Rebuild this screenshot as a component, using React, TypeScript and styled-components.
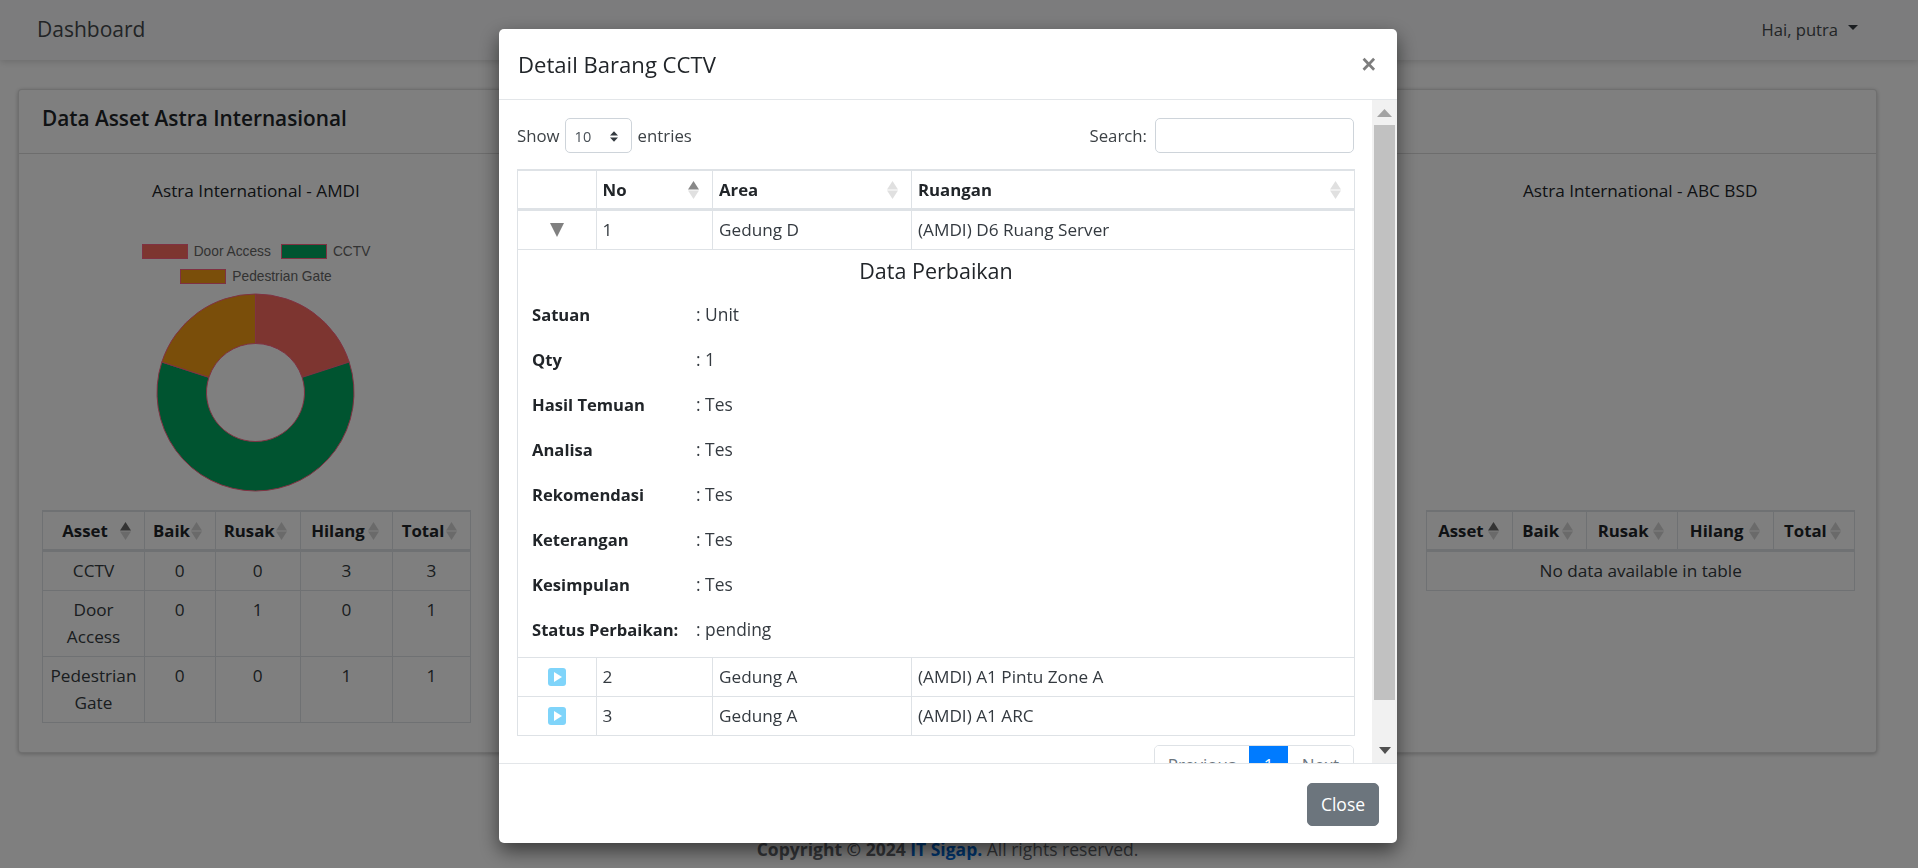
import React from 'react';
import styled, { createGlobalStyle } from 'styled-components';

const Global = createGlobalStyle`
  html, body { margin: 0; padding: 0; height: 868px; overflow: hidden; background: #fff; }
  body { font-family: "Open Sans", "Noto Sans", sans-serif; font-size: 17.2px; line-height: 27px; color: #212529; }
  * { box-sizing: border-box; }
`;

const Navbar = styled.header`
  height: 60px; background: #f8f9fa; display: flex; align-items: center; justify-content: space-between;
  padding: 0 60px 2px 37px; box-shadow: 0 2px 7px rgba(0,0,0,.15);
`;
const Brand = styled.div`font-size: 21px; color: #45494d;`;
const UserMenu = styled.div`display: flex; align-items: center; gap: 10px; font-size: 16.6px; color: #45494d;`;
const Caret = styled.span`width: 0; height: 0; border-left: 5px solid transparent; border-right: 5px solid transparent; border-top: 5px solid #343a40; margin-top: -3px;`;

const Page = styled.main`width: 1895px; padding: 29px 18px 0;`;
const Card = styled.section`
  height: 664px; border: 1px solid rgba(0,0,0,.125); border-radius: 4px; box-shadow: 0 1px 4px rgba(0,0,0,.25); background: #fff;
`;
const CardHeader = styled.div`
  height: 64px; padding: 0 23px 6px; display: flex; align-items: center; border-bottom: 1px solid rgba(0,0,0,.14);
  font-size: 20.8px; font-weight: 600; color: #212529;
`;
const CardBody = styled.div`
  display: grid; grid-template-columns: repeat(4, 428px); column-gap: 33.4px; padding: 23px 23px 0;
`;
const Column = styled.div`display: flex; flex-direction: column;`;
const ColumnTitle = styled.div`text-align: center; height: 27px; font-size: 17.2px; margin-bottom: 1px; color: #212529;`;
const ChartArea = styled.div`height: 305px; display: flex; flex-direction: column; align-items: center; padding-top: 34px;`;
const Legend = styled.div`display: flex; flex-wrap: wrap; justify-content: center; align-content: flex-start; column-gap: 10px; width: 300px; height: 54px;`;
const LegendItem = styled.div`display: flex; align-items: center; gap: 6px; height: 25px; font-family: "Liberation Sans", Arial, sans-serif; font-size: 13.75px; color: #666;`;
const Swatch = styled.span<{ $c: string }>`width: 46px; height: 15px; background: ${p => p.$c}; border: 1px solid rgb(255, 99, 132);`;
const DonutSvg = styled.svg`width: 200px; height: 200px; display: block; flex: none;`;

const DataTable = styled.table`
  table-layout: fixed; border-collapse: collapse; width: 100%; color: #212529;
`;
const Col = styled.col<{ $w: number }>`width: ${p => p.$w}px;`;
const Th = styled.th<{ $left?: boolean }>`
  position: relative; height: 39px; padding: 0 25px 0 ${p => (p.$left ? '6px' : '8px')};
  border: 1px solid #dee2e6; border-top-width: 2px; border-bottom-width: 3px;
  text-align: ${p => (p.$left ? 'left' : 'center')}; font-size: 16.8px; font-weight: 700; white-space: nowrap;
`;
const Td = styled.td<{ $left?: boolean }>`
  padding: 5.5px 6px; border: 1px solid #dee2e6; vertical-align: top;
  font-size: 17.2px; color: #343a40; text-align: ${p => (p.$left ? 'left' : 'center')};
`;
const SortMark = styled.svg`position: absolute; right: 13px; top: 10px; width: 11px; height: 18px;`;

const Footer = styled.footer`
  width: 1895px; margin-top: 83px; text-align: center; font-size: 17.5px; font-weight: 700; color: #666a70;
`;
const FooterLink = styled.span`color: #0069d9;`;
const FooterRest = styled.span`font-weight: 400;`;

const Backdrop = styled.div`position: fixed; inset: 0; background: rgba(0,0,0,.5);`;
const Modal = styled.div`
  position: fixed; left: 499px; top: 29px; width: 898px; height: 814px; background: #fff; border-radius: 5px;
  display: flex; flex-direction: column; overflow: hidden; box-shadow: 0 8px 20px rgba(0,0,0,.55);
`;
const ModalHeader = styled.div`
  height: 71px; flex: none; padding: 0 19px; border-bottom: 1px solid #e3e6e9; display: flex; align-items: center; justify-content: space-between;
`;
const ModalTitle = styled.div`font-size: 22.1px; font-weight: 500; color: #212529;`;
const CloseX = styled.div`font-size: 25px; font-weight: 700; color: #7d7d7d; line-height: 1; font-family: "Liberation Sans", sans-serif; margin-right: 2px; margin-top: 1px;`;
const ModalMiddle = styled.div`flex: 1; min-height: 0; display: flex;`;
const ModalContent = styled.div`flex: 1; min-width: 0; overflow: hidden; padding: 18px 18px 0 18px;`;
const Scrollbar = styled.div`width: 25px; flex: none; background: #f1f1f1; display: flex; flex-direction: column; align-items: center;`;
const ScrollCell = styled.div`height: 25px; flex: none; display: flex; align-items: center; justify-content: center;`;
const ScrollThumb = styled.div`width: 21px; height: 575px; flex: none; background: #c1c1c1;`;
const ScrollSpacer = styled.div`flex: 1;`;
const ModalFooter = styled.div`
  height: 80px; flex: none; border-top: 1px solid #e3e6e9; display: flex; align-items: center; justify-content: flex-end; padding: 0 18px 0 0;
`;
const CloseButton = styled.button`
  width: 72px; height: 43px; background: #6c757d; border: 1px solid #6c757d; color: #fff; border-radius: 5px;
  font-family: inherit; font-size: 17.5px; padding: 0; margin-top: 1px;
`;

const Controls = styled.div`display: flex; justify-content: space-between; align-items: center; height: 35px; margin-bottom: 16px; font-size: 16.8px; color: #3d4246;`;
const ControlGroup = styled.div`display: flex; align-items: center;`;
const Select = styled.div`
  width: 67px; height: 35px; margin: 0 6px 0 5px; border: 1px solid #ced4da; border-radius: 5px; display: flex; align-items: center; justify-content: space-between;
  padding: 2px 13px 0 9px; font-size: 14.5px; color: #495057;
`;
const SearchInput = styled.input`width: 199px; height: 35px; margin-left: 8px; border: 1px solid #ced4da; border-radius: 5px; background: #fff; padding: 0 8px;`;

const ExpandTd = styled(Td)`padding: 0; vertical-align: middle;`;
const IconWrap = styled.div`display: flex; justify-content: center; align-items: center;`;
const ChildCell = styled.td`padding: 0 0 5px; border: 1px solid #dee2e6;`;
const ChildHeading = styled.div`height: 42px; display: flex; align-items: center; justify-content: center; font-size: 21.5px; font-weight: 500; color: #212529;`;
const DetailRow = styled.div`display: flex; align-items: center; height: 45px; padding-left: 14px;`;
const DetailLabel = styled.div`width: 164px; flex: none; font-size: 16.6px; font-weight: 700; color: #212529; white-space: nowrap;`;
const DetailValue = styled.div`font-size: 17.4px; color: #343a40;`;

const Pagination = styled.div`display: flex; justify-content: flex-end; margin-top: 9px; height: 47px;`;
const PageGroup = styled.div`display: flex; border: 1px solid #dee2e6; border-radius: 5px; overflow: hidden; font-size: 17px; height: 47px;`;
const PageItem = styled.div<{ $active?: boolean; $w: number }>`
  width: ${p => p.$w}px; display: flex; align-items: center; justify-content: center; padding-bottom: 7px;
  background: ${p => (p.$active ? '#007bff' : '#fff')}; color: ${p => (p.$active ? '#fff' : '#6c757d')};
`;

type Sort = 'up' | 'none';
const SortIcon = ({ state, light }: { state: Sort; light?: boolean }) => (
  <SortMark viewBox="0 0 11 18">
    <path d="M5.5 0 L11 8.5 H0 Z" fill={state === 'up' ? (light ? '#888' : '#000') : (light ? '#e0e0e0' : '#000')} fillOpacity={light ? 1 : state === 'up' ? 0.6 : 0.17} />
    <path d="M0 9.5 H11 L5.5 18 Z" fill={light ? '#e0e0e0' : '#000'} fillOpacity={light ? 1 : 0.17} />
  </SortMark>
);

const polar = (r: number, deg: number) => {
  const a = ((deg - 90) * Math.PI) / 180;
  return `${(99.5 + r * Math.cos(a)).toFixed(2)} ${(99.5 + r * Math.sin(a)).toFixed(2)}`;
};
const sector = (from: number, to: number) => {
  const large = to - from > 180 ? 1 : 0;
  return `M${polar(98.5, from)} A98.5 98.5 0 ${large} 1 ${polar(98.5, to)} L${polar(49, to)} A49 49 0 ${large} 0 ${polar(49, from)} Z`;
};

const Donut = () => (
  <DonutSvg viewBox="0 0 200 200">
    <path d={sector(0, 72)} fill="#fa6a60" stroke="#ff6384" strokeWidth="1" />
    <path d={sector(72, 288)} fill="#00a960" stroke="#ff6384" strokeWidth="1" />
    <path d={sector(288, 360)} fill="#f59c14" stroke="#ff6384" strokeWidth="1" />
  </DonutSvg>
);

const assetHead = ['Asset', 'Baik', 'Rusak', 'Hilang', 'Total'];
const AssetHeadRow = () => (
  <thead>
    <tr>
      {assetHead.map((h, i) => (
        <Th key={h}>{h}<SortIcon state={i === 0 ? 'up' : 'none'} /></Th>
      ))}
    </tr>
  </thead>
);

const amdiRows = [
  ['CCTV', '0', '0', '3', '3'],
  ['Door Access', '0', '1', '0', '1'],
  ['Pedestrian Gate', '0', '0', '1', '1'],
];

const details = [
  ['Satuan', 'Unit'], ['Qty', '1'], ['Hasil Temuan', 'Tes'], ['Analisa', 'Tes'],
  ['Rekomendasi', 'Tes'], ['Keterangan', 'Tes'], ['Kesimpulan', 'Tes'], ['Status Perbaikan:', 'pending'],
];

const PlayIcon = () => (
  <svg width="18" height="18" viewBox="0 0 18 18">
    <rect width="18" height="18" rx="3" fill="#7fd4fa" />
    <path d="M6 4 L14 9 L6 14 Z" fill="#fff" />
  </svg>
);
const CollapseIcon = () => (
  <svg width="14" height="14" viewBox="0 0 14 14"><path d="M0 0 H14 L7 14 Z" fill="#808080" /></svg>
);

export default function App() {
  return (
    <>
      <Global />
      <Navbar>
        <Brand>Dashboard</Brand>
        <UserMenu>Hai, putra<Caret /></UserMenu>
      </Navbar>
      <Page>
        <Card>
          <CardHeader>Data Asset Astra Internasional</CardHeader>
          <CardBody>
            <Column>
              <ColumnTitle>Astra International - AMDI</ColumnTitle>
              <ChartArea>
                <Legend>
                  <LegendItem><Swatch $c="#fa6a60" />Door Access</LegendItem>
                  <LegendItem><Swatch $c="#00a960" />CCTV</LegendItem>
                  <LegendItem><Swatch $c="#f59c14" />Pedestrian Gate</LegendItem>
                </Legend>
                <Donut />
              </ChartArea>
              <DataTable>
                <colgroup>
                  {[102, 70.5, 85.5, 92, 78].map((w, i) => <Col key={i} $w={w} />)}
                </colgroup>
                <AssetHeadRow />
                <tbody>
                  {amdiRows.map(r => (
                    <tr key={r[0]}>{r.map((c, i) => <Td key={i}>{c}</Td>)}</tr>
                  ))}
                </tbody>
              </DataTable>
            </Column>
            <Column />
            <Column />
            <Column>
              <ColumnTitle>Astra International - ABC BSD</ColumnTitle>
              <ChartArea />
              <DataTable>
                <colgroup>
                  {[85.5, 74, 91, 96, 81.5].map((w, i) => <Col key={i} $w={w} />)}
                </colgroup>
                <AssetHeadRow />
                <tbody>
                  <tr><Td colSpan={5}>No data available in table</Td></tr>
                </tbody>
              </DataTable>
            </Column>
          </CardBody>
        </Card>
      </Page>
      <Footer>Copyright © 2024 <FooterLink>IT Sigap.</FooterLink> <FooterRest>All rights reserved.</FooterRest></Footer>
      <Backdrop />
      <Modal>
        <ModalHeader>
          <ModalTitle>Detail Barang CCTV</ModalTitle>
          <CloseX>×</CloseX>
        </ModalHeader>
        <ModalMiddle>
          <ModalContent>
            <Controls>
              <ControlGroup>
                Show
                <Select>
                  10
                  <svg width="8" height="11" viewBox="0 0 9 12"><path d="M4.5 0 L9 5 H0 Z M0 7 H9 L4.5 12 Z" fill="#343a40" /></svg>
                </Select>
                entries
              </ControlGroup>
              <ControlGroup>
                Search:
                <SearchInput aria-label="Search" />
              </ControlGroup>
            </Controls>
            <DataTable>
              <colgroup>
                {[78.5, 116.5, 199, 443].map((w, i) => <Col key={i} $w={w} />)}
              </colgroup>
              <thead>
                <tr>
                  <Th $left />
                  <Th $left>No<SortIcon state="up" light /></Th>
                  <Th $left>Area<SortIcon state="none" light /></Th>
                  <Th $left>Ruangan<SortIcon state="none" light /></Th>
                </tr>
              </thead>
              <tbody>
                <tr>
                  <ExpandTd><IconWrap><CollapseIcon /></IconWrap></ExpandTd>
                  <Td $left>1</Td><Td $left>Gedung D</Td><Td $left>(AMDI) D6 Ruang Server</Td>
                </tr>
                <tr>
                  <ChildCell colSpan={4}>
                    <ChildHeading>Data Perbaikan</ChildHeading>
                    {details.map(([k, v]) => (
                      <DetailRow key={k}><DetailLabel>{k}</DetailLabel><DetailValue>: {v}</DetailValue></DetailRow>
                    ))}
                  </ChildCell>
                </tr>
                <tr>
                  <ExpandTd><IconWrap><PlayIcon /></IconWrap></ExpandTd>
                  <Td $left>2</Td><Td $left>Gedung A</Td><Td $left>(AMDI) A1 Pintu Zone A</Td>
                </tr>
                <tr>
                  <ExpandTd><IconWrap><PlayIcon /></IconWrap></ExpandTd>
                  <Td $left>3</Td><Td $left>Gedung A</Td><Td $left>(AMDI) A1 ARC</Td>
                </tr>
              </tbody>
            </DataTable>
            <Pagination>
              <PageGroup>
                <PageItem $w={94}>Previous</PageItem>
                <PageItem $w={39} $active>1</PageItem>
                <PageItem $w={65}>Next</PageItem>
              </PageGroup>
            </Pagination>
          </ModalContent>
          <Scrollbar>
            <ScrollCell><svg width="15" height="8" viewBox="0 0 15 8"><path d="M7.5 0 L15 8 H0 Z" fill="#a3a3a3" /></svg></ScrollCell>
            <ScrollThumb />
            <ScrollSpacer />
            <ScrollCell><svg width="12" height="7" viewBox="0 0 12 7"><path d="M0 0 H12 L6 7 Z" fill="#505050" /></svg></ScrollCell>
          </Scrollbar>
        </ModalMiddle>
        <ModalFooter><CloseButton>Close</CloseButton></ModalFooter>
      </Modal>
    </>
  );
}
